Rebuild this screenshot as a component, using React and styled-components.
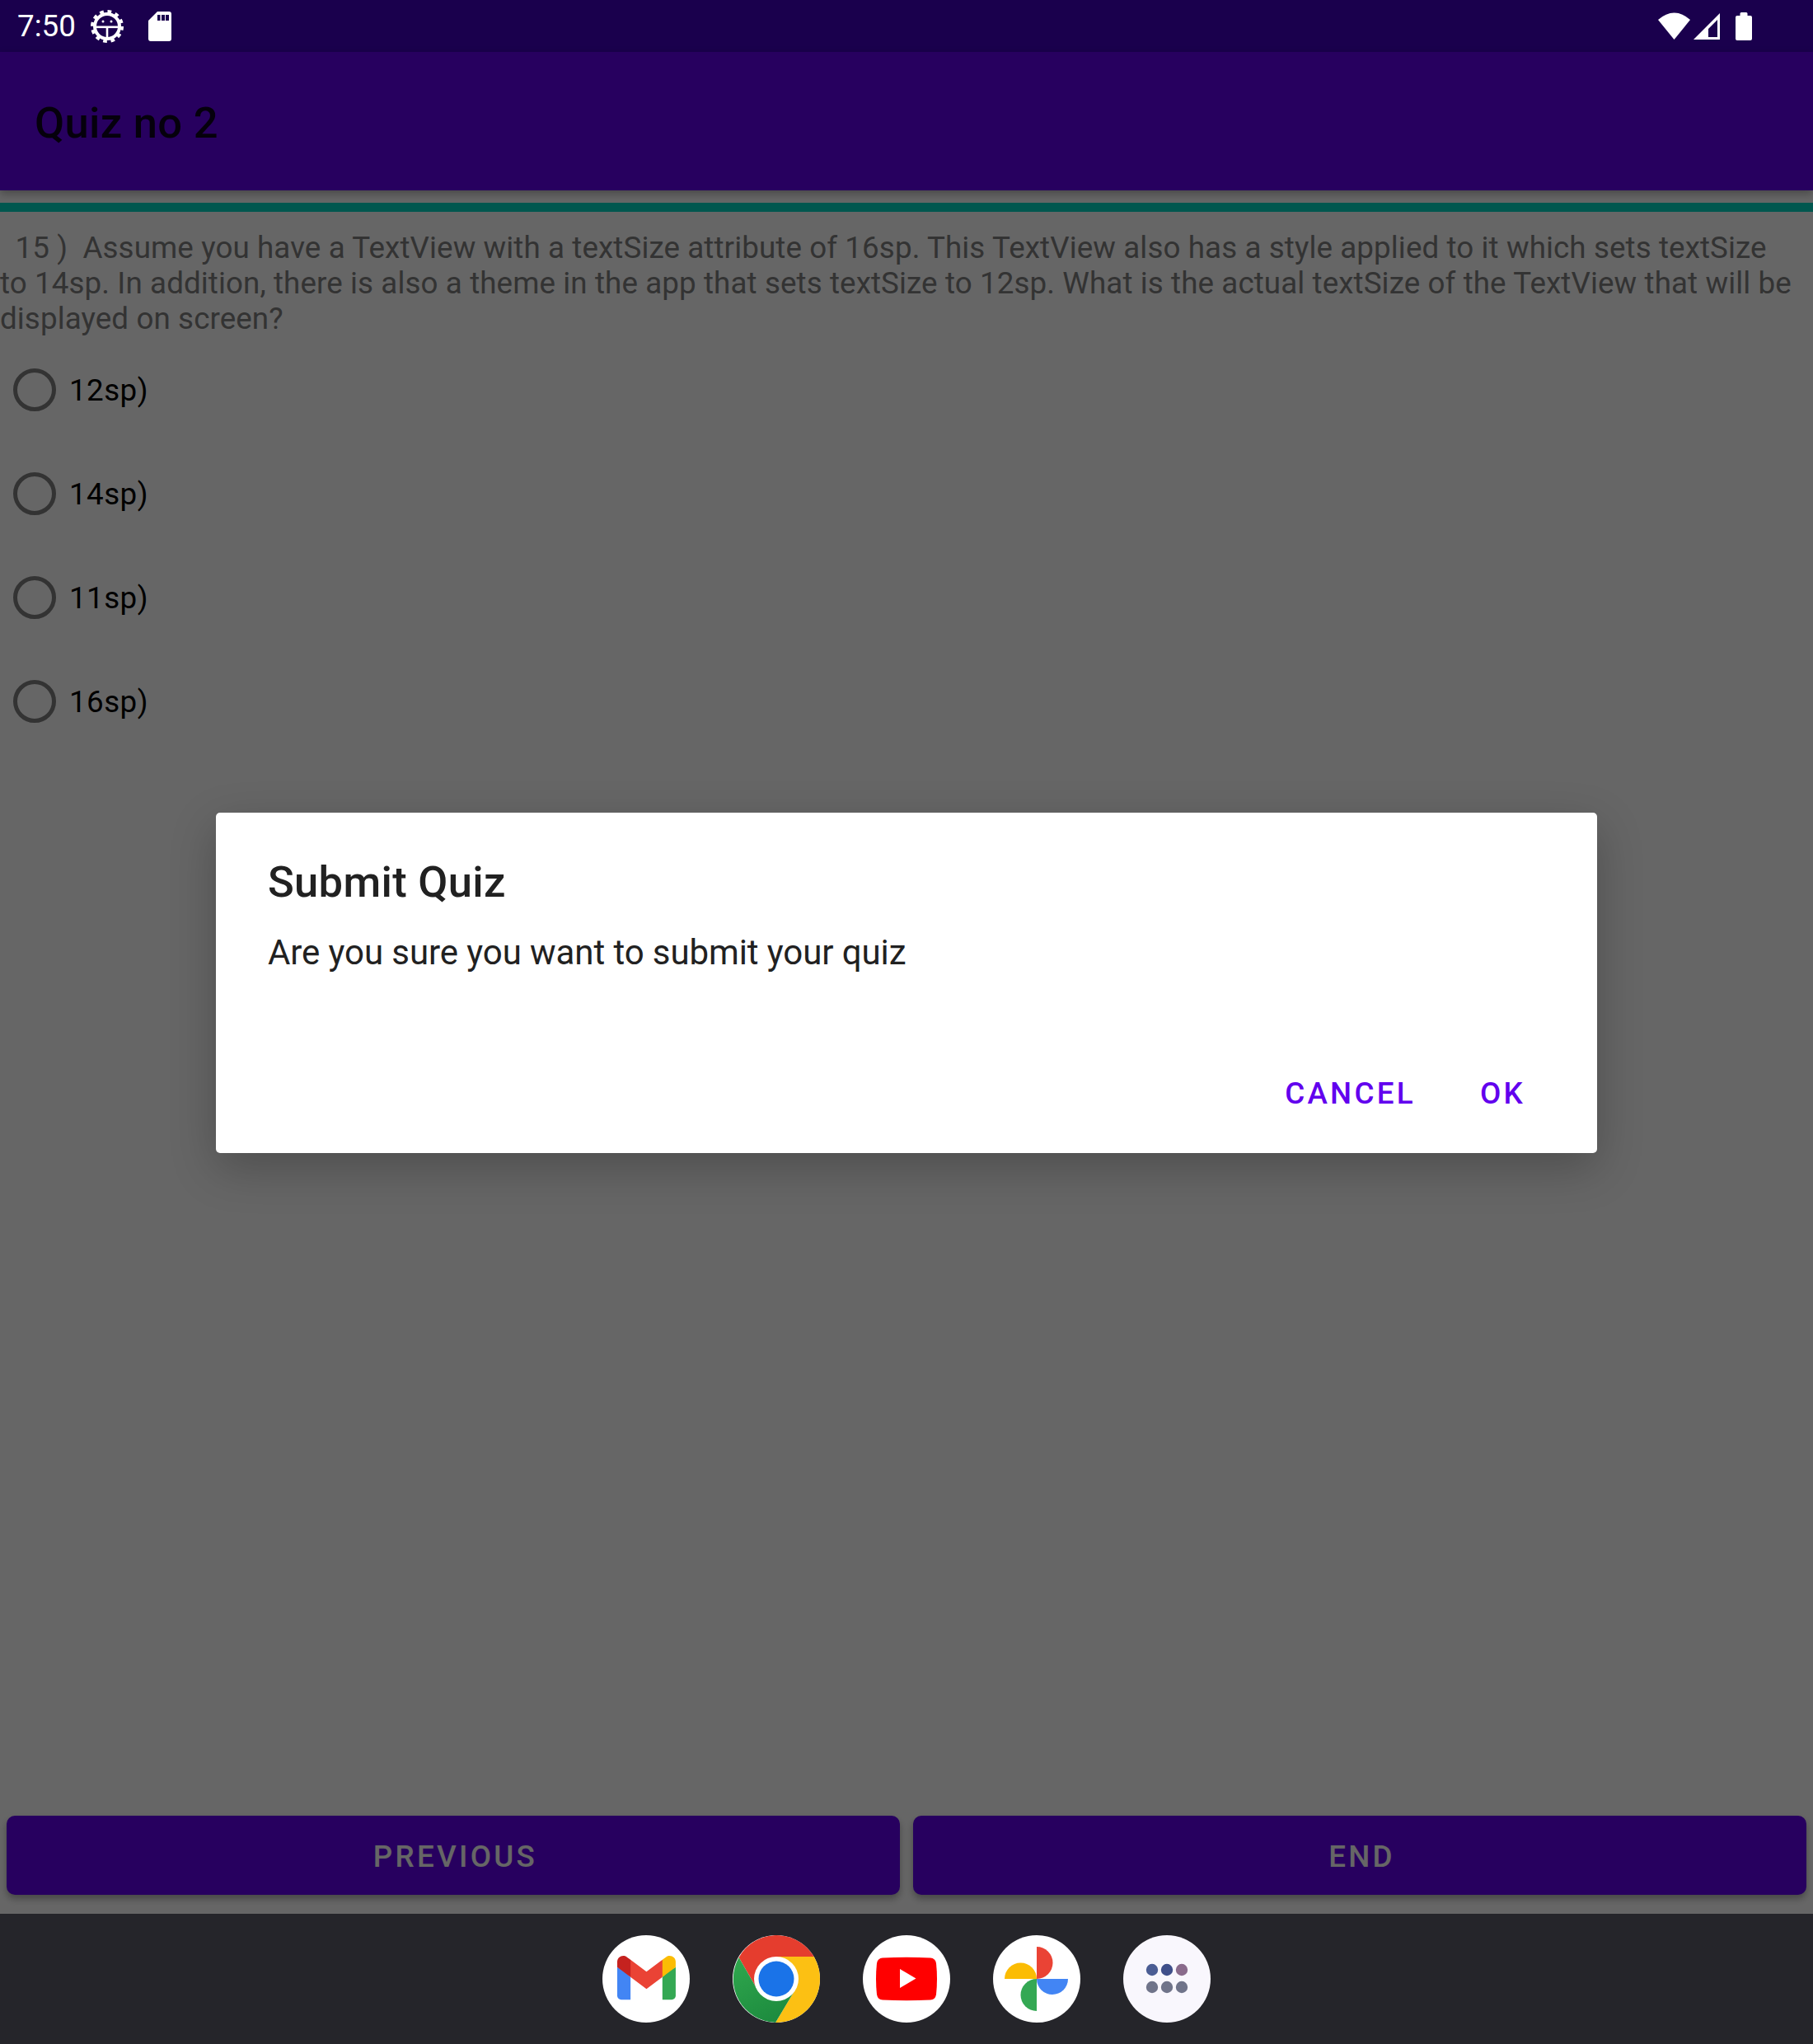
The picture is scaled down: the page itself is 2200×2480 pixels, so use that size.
import React from "react";
import styled, { createGlobalStyle } from "styled-components";

const GlobalStyle = createGlobalStyle`
    html, body {
        margin: 0;
        padding: 0;
        background: #fff;
    }
    * {
        box-sizing: border-box;
    }
`;

const Screen = styled.div`
    width: 2200px;
    height: 2480px;
    display: flex;
    flex-direction: column;
    font-family: Roboto, "Liberation Sans", sans-serif;
    overflow: hidden;
`;

const StatusBar = styled.div`
    height: 63px;
    flex-shrink: 0;
    background: #1a004d;
    display: flex;
    align-items: center;
    justify-content: space-between;
    padding: 0 74px 0 21px;
    color: #fff;
`;

const StatusGroup = styled.div`
    display: flex;
    align-items: center;
    gap: ${(p) => p.$gap}px;
`;

const Clock = styled.span`
    font-size: 36.75px;
`;

const Body = styled.div`
    position: relative;
    flex: 1;
    min-height: 0;
    display: flex;
    flex-direction: column;
    background: #fff;
`;

const AppBar = styled.div`
    height: 168px;
    flex-shrink: 0;
    background: #6200ee;
    display: flex;
    align-items: center;
    padding: 3px 0 0 42px;
    box-shadow: 0 4px 10px rgba(0, 0, 0, 0.3);
`;

const AppTitle = styled.div`
    font-size: 52.5px;
    font-weight: 500;
    letter-spacing: 0.006em;
    color: rgba(0, 0, 0, 0.87);
`;

const Progress = styled.div`
    height: 11px;
    flex-shrink: 0;
    margin-top: 15px;
    background: #03dac5;
`;

const Question = styled.div`
    margin-top: 22px;
    padding-right: 20px;
    font-size: 36.75px;
    line-height: 43px;
    letter-spacing: 0.0027em;
    color: #808080;
    white-space: pre-wrap;
`;

const Options = styled.div`
    margin-top: 2px;
    display: flex;
    flex-direction: column;
`;

const OptionRow = styled.div`
    height: 126px;
    display: flex;
    align-items: center;
    padding-left: 16px;
    gap: 16px;
    font-size: 36.75px;
    letter-spacing: 0.012em;
    color: #000;
`;

const Radio = styled.span`
    width: 52px;
    height: 52px;
    border-radius: 50%;
    border: 5.5px solid #808080;
`;

const Spacer = styled.div`
    flex: 1;
`;

const ButtonRow = styled.div`
    display: flex;
    gap: 16px;
    padding: 0 8px 23px;
`;

const NavButton = styled.div`
    flex: 1;
    height: 96px;
    display: flex;
    align-items: center;
    justify-content: center;
    padding: 2px 0 0 5px;
    border-radius: 10px;
    background: #6200ee;
    color: #fff;
    font-size: 36.75px;
    font-weight: 500;
    letter-spacing: 0.0892em;
    box-shadow: 0 5px 8px rgba(0, 0, 0, 0.3);
`;

const Scrim = styled.div`
    position: absolute;
    inset: 0;
    background: rgba(0, 0, 0, 0.6);
    display: flex;
    align-items: center;
    justify-content: center;
`;

const Dialog = styled.div`
    width: 1676px;
    height: 413px;
    background: #fff;
    border-radius: 5px;
    padding: 53px 63px 0;
    display: flex;
    flex-direction: column;
    box-shadow: 0 18px 55px rgba(0, 0, 0, 0.24);
`;

const DialogTitle = styled.div`
    font-size: 52.5px;
    line-height: 62px;
    font-weight: 500;
    letter-spacing: 0.006em;
    color: #212121;
`;

const DialogText = styled.div`
    margin-top: 30px;
    font-size: 42px;
    line-height: 50px;
    letter-spacing: -0.002em;
    color: #212121;
`;

const DialogActions = styled.div`
    margin-top: auto;
    padding-bottom: 51px;
    margin-right: 24px;
    display: flex;
    justify-content: flex-end;
    gap: 78px;
`;

const DialogAction = styled.div`
    font-size: 36.75px;
    font-weight: 500;
    letter-spacing: 0.0892em;
    color: #6200ee;
`;

const Dock = styled.div`
    height: 158px;
    flex-shrink: 0;
    background: #25252a;
    display: flex;
    align-items: center;
    justify-content: center;
    gap: 52px;
`;

const DockIcon = styled.div`
    width: 106px;
    height: 106px;
    border-radius: 50%;
    background: ${(p) => p.$bg || "#fff"};
    overflow: hidden;
    display: flex;
`;

const GearIcon = () => (
    <svg width="40" height="40" viewBox="0 0 40 40">
        <circle cx="20" cy="20" r="18" fill="none" stroke="#fff" strokeWidth="4" strokeDasharray="4.7 4.72" />
        <circle cx="20" cy="20" r="15" fill="none" stroke="#fff" strokeWidth="4" />
        <rect x="6" y="19.5" width="28" height="2.6" fill="#fff" />
        <rect x="18.7" y="20" width="2.6" height="15" fill="#fff" />
        <circle cx="15" cy="14" r="1.5" fill="#fff" />
        <circle cx="25" cy="14" r="1.5" fill="#fff" />
    </svg>
);

const SdIcon = () => (
    <svg width="28" height="36" viewBox="0 0 28 36">
        <path
            fillRule="evenodd"
            fill="#fff"
            d="M11 0H25a3 3 0 0 1 3 3V33a3 3 0 0 1-3 3H3a3 3 0 0 1-3-3V11Z M11 4v7h3.500V4Z M16 4v7h4V4Z M21 4v7h4V4Z"
        />
    </svg>
);

const WifiIcon = () => (
    <svg width="39" height="33" viewBox="0 0 39 33">
        <path fill="#fff" d="M19.5 33L0 9Q19.5-8 39 9Z" />
    </svg>
);

const SignalIcon = () => (
    <svg width="32" height="32" viewBox="0 0 32 32">
        <path fillRule="evenodd" fill="#fff" d="M0 32L32 0V32Z M18 19V29H29V8Z" />
    </svg>
);

const BatteryIcon = () => (
    <svg width="20" height="34" viewBox="0 0 20 34">
        <path fill="#fff" d="M5.500 1.500Q5.500 0 7 0H13Q14.500 0 14.500 1.500V4H18Q20 4 20 6V32Q20 34 18 34H2Q0 34 0 32V6Q0 4 2 4H5.500Z" />
    </svg>
);

const GmailIcon = () => (
    <svg width="106" height="106" viewBox="0 0 106 106">
        <g transform="translate(18 25) scale(0.277)">
            <path fill="#4285F4" d="M58.182 192.05V93.14L27.507 65.077 0 49.504v125.091c0 9.658 7.825 17.455 17.455 17.455h40.727Z" />
            <path fill="#34A853" d="M197.818 192.05h40.727c9.659 0 17.455-7.826 17.455-17.455V49.505l-31.156 17.837-27.026 25.798v98.91Z" />
            <path fill="#EA4335" d="m58.182 93.14-4.174-38.647 4.174-36.989L128 69.868l69.818-52.364 4.669 34.992-4.669 40.644L128 145.504z" />
            <path fill="#FBBC04" d="M197.818 17.504V93.14L256 49.504V26.231c0-21.585-24.64-33.89-41.89-20.945l-16.292 12.218Z" />
            <path fill="#C5221F" d="M0 49.504l26.759 20.07L58.182 93.14V17.504L41.89 5.286C24.61-7.66 0 4.646 0 26.23v23.273Z" />
        </g>
    </svg>
);

const ChromeIcon = () => (
    <svg width="106" height="106" viewBox="0 0 106 106">
        <defs>
            <linearGradient id="chromeGreen" x1="0.2" y1="0" x2="0.7" y2="1">
                <stop offset="0" stopColor="#2fa64d" />
                <stop offset="1" stopColor="#1c8a3e" />
            </linearGradient>
        </defs>
        <path fill="#e53d2e" d="M53 53L30 66L7.600 27A53 53 0 0 1 99.500 26H53Z" />
        <path fill="#fcc013" d="M53 53V26H99.500A53 53 0 0 1 52 106L76 66Z" />
        <path fill="url(#chromeGreen)" d="M53 53L76 66L52 106A53 53 0 0 1 7.600 27L30 66Z" />
        <circle cx="53" cy="53" r="27" fill="#fff" />
        <circle cx="53" cy="53" r="21.500" fill="#1a73e8" />
    </svg>
);

const YoutubeIcon = () => (
    <svg width="106" height="106" viewBox="0 0 106 106">
        <path
            fill="#f00"
            d="M24 27.500Q53 26 82 27.500Q88 28 89 34Q91 53 89 72Q88 78 82 78.500Q53 80 24 78.500Q18 78 17 72Q15 53 17 34Q18 28 24 27.500Z"
        />
        <path fill="#fff" d="M45 41L64.500 52.500L45 64Z" />
    </svg>
);

const PhotosIcon = () => (
    <svg width="106" height="106" viewBox="0 0 106 106">
        <path fill="#ea4335" d="M53 14A19.500 19.500 0 0 1 53 53Z" />
        <path fill="#fbbc04" d="M14 53A19.500 19.500 0 0 1 53 53Z" />
        <path fill="#34a853" d="M53 92A19.500 19.500 0 0 1 53 53Z" />
        <path fill="#4285f4" d="M91 53A19 19 0 0 1 53 53Z" />
    </svg>
);

const AppsIcon = () => (
    <svg width="106" height="106" viewBox="0 0 106 106">
        <circle cx="35" cy="42" r="7.200" fill="#4b5d94" />
        <circle cx="53" cy="42" r="7.200" fill="#3f4f8a" />
        <circle cx="71" cy="42" r="7.200" fill="#8a6b8c" />
        <circle cx="35" cy="63" r="7.200" fill="#70748a" />
        <circle cx="53" cy="63" r="7.200" fill="#70748a" />
        <circle cx="71" cy="63" r="7.200" fill="#70748a" />
    </svg>
);

const answers = ["12sp)", "14sp)", "11sp)", "16sp)"];

const App = () => {
    return (
        <Screen>
            <GlobalStyle />
            <StatusBar>
                <StatusGroup $gap={18}>
                    <Clock>7:50</Clock>
                    <StatusGroup $gap={30}>
                        <GearIcon />
                        <SdIcon />
                    </StatusGroup>
                </StatusGroup>
                <StatusGroup $gap={19}>
                    <StatusGroup $gap={4}>
                        <WifiIcon />
                        <SignalIcon />
                    </StatusGroup>
                    <BatteryIcon />
                </StatusGroup>
            </StatusBar>
            <Body>
                <AppBar>
                    <AppTitle>Quiz no 2</AppTitle>
                </AppBar>
                <Progress />
                <Question>
                    {"  15 )  Assume you have a TextView with a textSize attribute of 16sp. This TextView also has a style applied to it which sets textSize to 14sp. In addition, there is also a theme in the app that sets textSize to 12sp. What is the actual textSize of the TextView that will be displayed on screen?"}
                </Question>
                <Options>
                    {answers.map((a) => (
                        <OptionRow key={a}>
                            <Radio />
                            {a}
                        </OptionRow>
                    ))}
                </Options>
                <Spacer />
                <ButtonRow>
                    <NavButton>PREVIOUS</NavButton>
                    <NavButton>END</NavButton>
                </ButtonRow>
                <Scrim>
                    <Dialog>
                        <DialogTitle>Submit Quiz</DialogTitle>
                        <DialogText>Are you sure you want to submit your quiz</DialogText>
                        <DialogActions>
                            <DialogAction>CANCEL</DialogAction>
                            <DialogAction>OK</DialogAction>
                        </DialogActions>
                    </Dialog>
                </Scrim>
            </Body>
            <Dock>
                <DockIcon><GmailIcon /></DockIcon>
                <DockIcon><ChromeIcon /></DockIcon>
                <DockIcon><YoutubeIcon /></DockIcon>
                <DockIcon><PhotosIcon /></DockIcon>
                <DockIcon $bg="#f9f7fd"><AppsIcon /></DockIcon>
            </Dock>
        </Screen>
    );
};

export default App;
